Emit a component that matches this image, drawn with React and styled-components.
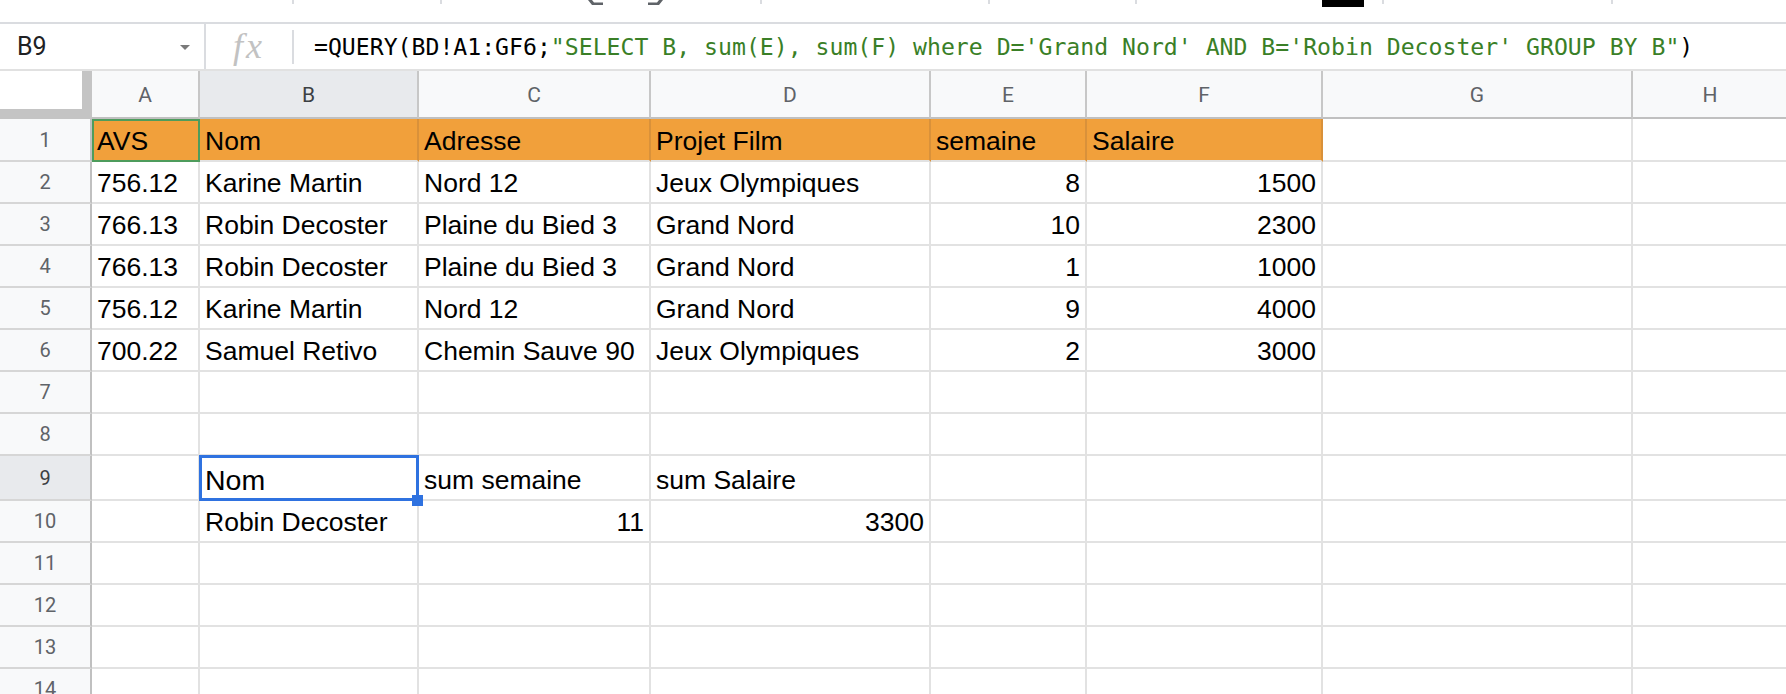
import React from 'react';
import styled, { createGlobalStyle } from 'styled-components';

const COLS = [92, 108, 219, 232, 280, 156, 236, 310, 156];
const TEMPLATE = COLS.map((c) => `${c}px`).join(' ');
const LETTERS = ['A', 'B', 'C', 'D', 'E', 'F', 'G', 'H'];

const Global = createGlobalStyle`
  html, body { margin: 0; padding: 0; background: #fff; overflow: hidden; }
  body { font-family: "Liberation Sans", Arial, sans-serif; }
  #root { width: 1786px; height: 694px; overflow: hidden; }
`;

const Page = styled.div`
  width: 1786px;
  height: 694px;
  overflow: hidden;
  display: flex;
  flex-direction: column;
  background: #fff;
`;

/* ---------- top toolbar remnant ---------- */
const Toolbar = styled.div`
  height: 22px;
  flex-shrink: 0;
  border-bottom: 2px solid #dadce0;
  display: flex;
  align-items: flex-start;
`;
const ToolSep = styled.div`
  flex-shrink: 0;
  width: 2px;
  height: 4px;
  background: #dadce0;
  margin-left: ${(p) => p.$gap}px;
`;
const ToolBlock = styled.div`
  flex-shrink: 0;
  width: 42px;
  height: 7px;
  background: #000;
  margin-left: ${(p) => p.$gap}px;
`;
const ToolIcon = styled.svg`
  flex-shrink: 0;
  display: block;
  margin-left: ${(p) => p.$gap}px;
`;

/* ---------- formula bar ---------- */
const FormulaBar = styled.div`
  height: 45px;
  flex-shrink: 0;
  border-bottom: 2px solid #e1e1e1;
  display: flex;
  align-items: stretch;
`;
const NameBox = styled.div`
  width: 204px;
  box-sizing: border-box;
  padding: 0 14px 0 17px;
  display: flex;
  align-items: center;
  justify-content: space-between;
  font-family: Roboto, "Liberation Sans", sans-serif;
  font-size: 25px;
  color: #202124;
`;
const Caret = styled.span`
  width: 0;
  height: 0;
  border-left: 5px solid transparent;
  border-right: 5px solid transparent;
  border-top: 5px solid #7a7a7a;
  margin-top: 2px;
`;
const BarSep = styled.div`
  width: 2px;
  flex-shrink: 0;
  background: #dadce0;
  margin: ${(p) => (p.$inset ? '6px 0 5px' : '0')};
`;
const FxBox = styled.div`
  width: 86px;
  display: flex;
  align-items: center;
  justify-content: center;
  font-family: "Liberation Serif", "DejaVu Serif", serif;
  font-style: italic;
  font-size: 36px;
  letter-spacing: 3px;
  color: #c2c2c2;
  padding-bottom: 2px;
  box-sizing: border-box;
`;
const FormulaText = styled.div`
  padding-left: 20px;
  display: flex;
  align-items: center;
  white-space: nowrap;
  font-family: "DejaVu Sans Mono", "Liberation Mono", monospace;
  font-size: 23.15px;
  color: #000;
`;
const Str = styled.span`
  color: #3a7f27;
`;

/* ---------- grid ---------- */
const Grid = styled.div`
  display: flex;
  flex-direction: column;
`;
const HeaderRow = styled.div`
  display: grid;
  grid-template-columns: ${TEMPLATE};
  height: 48px;
  flex-shrink: 0;
`;
const Corner = styled.div`
  box-sizing: border-box;
  background: #fff;
  border-right: 10px solid #c4c4c4;
  border-bottom: 10px solid #c4c4c4;
`;
const ColHead = styled.div`
  box-sizing: border-box;
  background: ${(p) => (p.$active ? '#e8eaed' : '#f8f9fa')};
  border-right: 2px solid #c7c7c7;
  border-bottom: 2px solid #c0c0c0;
  display: flex;
  align-items: center;
  justify-content: center;
  font-family: Roboto, "Liberation Sans", sans-serif;
  font-size: 21px;
  color: ${(p) => (p.$active ? '#3c4043' : '#5f6368')};
  padding-top: 1px;
`;
const Row = styled.div`
  display: grid;
  grid-template-columns: ${TEMPLATE};
  height: ${(p) => p.$h}px;
  flex-shrink: 0;
`;
const RowHead = styled.div`
  box-sizing: border-box;
  background: ${(p) => (p.$active ? '#e8eaed' : '#f8f9fa')};
  border-right: 2px solid #c0c0c0;
  border-bottom: 2px solid #d6d6d6;
  display: flex;
  align-items: center;
  justify-content: center;
  font-family: Roboto, "Liberation Sans", sans-serif;
  font-size: 20px;
  color: ${(p) => (p.$active ? '#3c4043' : '#5f6368')};
`;
const Cell = styled.div`
  position: relative;
  box-sizing: border-box;
  background: ${(p) => p.$fill || '#fff'};
  border-right: 2px solid ${(p) => (p.$fill ? '#d9913a' : '#e2e2e2')};
  border-bottom: 2px solid #e2e2e2;
  display: flex;
  align-items: flex-end;
  justify-content: ${(p) => (p.$num ? 'flex-end' : 'flex-start')};
  padding: 0 5px 4px 5px;
  font-size: ${(p) => (p.$big ? '28.5px' : '26.5px')};
  line-height: 30px;
  color: #000;
  white-space: nowrap;
`;
const GreenFrame = styled.div`
  position: absolute;
  top: 0;
  left: 0;
  right: -2px;
  bottom: -2px;
  border: 2px solid #4e9c5c;
  pointer-events: none;
`;
const SelectFrame = styled.div`
  position: absolute;
  top: -1px;
  left: -1px;
  right: -2px;
  bottom: -2px;
  border: 3px solid #2f72e0;
  pointer-events: none;
`;
const Handle = styled.div`
  position: absolute;
  right: -6px;
  bottom: -7px;
  width: 11px;
  height: 11px;
  background: #2f72e0;
  z-index: 2;
`;

const ORANGE = '#f1a03b';

const header = ['AVS', 'Nom', 'Adresse', 'Projet Film', 'semaine', 'Salaire'];
const data = [
  ['756.12', 'Karine Martin', 'Nord 12', 'Jeux Olympiques', 8, 1500],
  ['766.13', 'Robin Decoster', 'Plaine du Bied 3', 'Grand Nord', 10, 2300],
  ['766.13', 'Robin Decoster', 'Plaine du Bied 3', 'Grand Nord', 1, 1000],
  ['756.12', 'Karine Martin', 'Nord 12', 'Grand Nord', 9, 4000],
  ['700.22', 'Samuel Retivo', 'Chemin Sauve 90', 'Jeux Olympiques', 2, 3000],
];

function buildRows() {
  const rows = [];
  // row 1
  rows.push({
    n: 1,
    h: 43,
    cells: LETTERS.map((_, i) => ({
      v: header[i] || '',
      fill: i < 6 ? ORANGE : null,
      green: i === 0,
    })),
  });
  data.forEach((r, idx) => {
    rows.push({
      n: idx + 2,
      h: 42,
      cells: LETTERS.map((_, i) => ({
        v: r[i] !== undefined ? String(r[i]) : '',
        num: typeof r[i] === 'number',
      })),
    });
  });
  rows.push({ n: 7, h: 42, cells: LETTERS.map(() => ({ v: '' })) });
  rows.push({ n: 8, h: 42, cells: LETTERS.map(() => ({ v: '' })) });
  rows.push({
    n: 9,
    h: 45,
    active: true,
    cells: LETTERS.map((_, i) => {
      if (i === 1) return { v: 'Nom', big: true, selected: true };
      if (i === 2) return { v: 'sum semaine' };
      if (i === 3) return { v: 'sum Salaire' };
      return { v: '' };
    }),
  });
  rows.push({
    n: 10,
    h: 42,
    cells: LETTERS.map((_, i) => {
      if (i === 1) return { v: 'Robin Decoster' };
      if (i === 2) return { v: '11', num: true };
      if (i === 3) return { v: '3300', num: true };
      return { v: '' };
    }),
  });
  for (let n = 11; n <= 14; n++) {
    rows.push({ n, h: 42, cells: LETTERS.map(() => ({ v: '' })) });
  }
  return rows;
}

const toolItems = [
  { t: 'sep', gap: 292 },
  { t: 'sep', gap: 146 },
  { t: 'undo', gap: 146 },
  { t: 'redo', gap: 45 },
  { t: 'sep', gap: 97 },
  { t: 'sep', gap: 226 },
  { t: 'sep', gap: 145 },
  { t: 'block', gap: 185 },
  { t: 'sep', gap: 18 },
  { t: 'sep', gap: 227 },
];

function ToolItem({ item }) {
  if (item.t === 'sep') return <ToolSep $gap={item.gap} />;
  if (item.t === 'block') return <ToolBlock $gap={item.gap} />;
  const flip = item.t === 'redo';
  return (
    <ToolIcon $gap={item.gap} width="15" height="6" viewBox="0 0 15 6">
      <path
        d={flip ? 'M15 0 L11 5 L0 5 L0 2.5 L9 2.5 L11 0 Z' : 'M0 0 L4 5 L15 5 L15 2.5 L6 2.5 L4 0 Z'}
        fill="#5f6368"
      />
    </ToolIcon>
  );
}

export default function App() {
  const rows = buildRows();
  return (
    <Page>
      <Global />
      <Toolbar>
        {toolItems.map((it, i) => (
          <ToolItem key={i} item={it} />
        ))}
      </Toolbar>
      <FormulaBar>
        <NameBox>
          <span>B9</span>
          <Caret />
        </NameBox>
        <BarSep />
        <FxBox>fx</FxBox>
        <BarSep $inset />
        <FormulaText>
          =QUERY(BD!A1:GF6;
          <Str>"SELECT B, sum(E), sum(F) where D='Grand Nord' AND B='Robin Decoster' GROUP BY B"</Str>)
        </FormulaText>
      </FormulaBar>
      <Grid>
        <HeaderRow>
          <Corner />
          {LETTERS.map((l) => (
            <ColHead key={l} $active={l === 'B'}>
              {l}
            </ColHead>
          ))}
        </HeaderRow>
        {rows.map((r) => (
          <Row key={r.n} $h={r.h}>
            <RowHead $active={r.active}>{r.n}</RowHead>
            {r.cells.map((c, i) => (
              <Cell key={i} $fill={c.fill} $num={c.num} $big={c.big}>
                {c.v}
                {c.green && <GreenFrame />}
                {c.selected && (
                  <>
                    <SelectFrame />
                    <Handle />
                  </>
                )}
              </Cell>
            ))}
          </Row>
        ))}
      </Grid>
    </Page>
  );
}
